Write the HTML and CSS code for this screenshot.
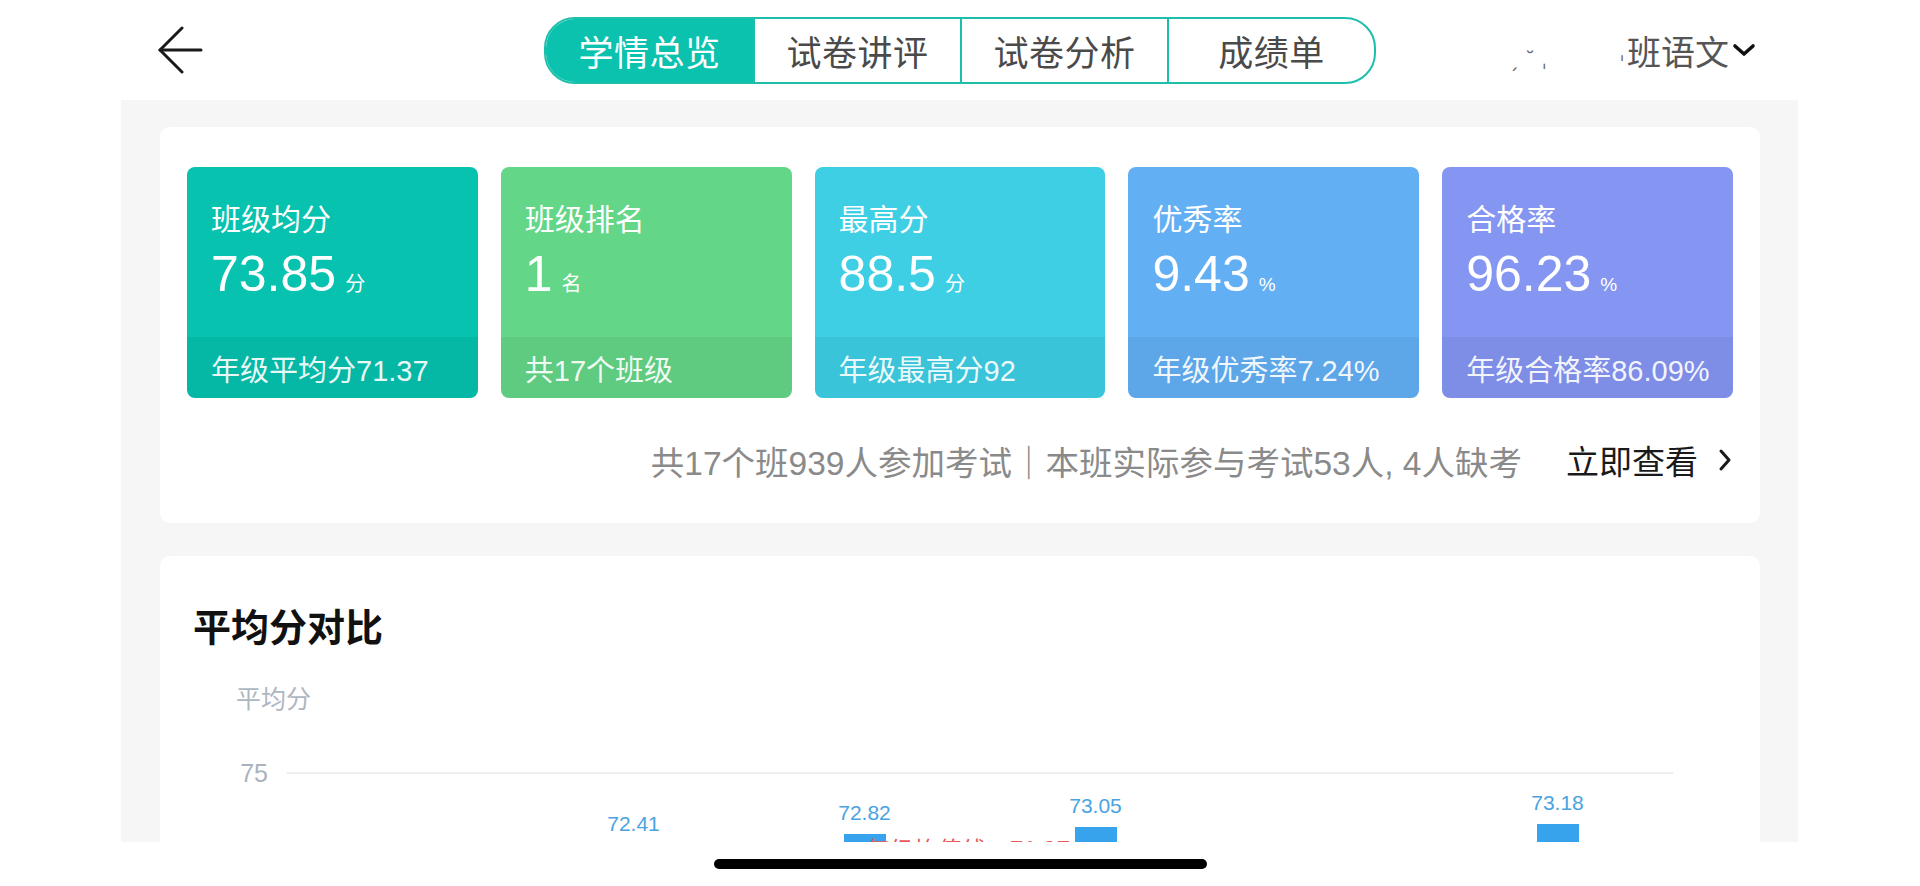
FILE: index.html
```html
<!DOCTYPE html>
<html lang="zh-CN">
<head>
<meta charset="utf-8">
<title>学情总览</title>
<link rel="stylesheet" href="styles.css">
</head>
<body>
<header class="topbar">
  <div class="left">
    <svg class="back" width="46" height="48" viewBox="0 0 46 48" aria-hidden="true">
      <polyline points="24,2 2,24 24,46" fill="none" stroke="#1a1a1a" stroke-width="3" stroke-linecap="round" stroke-linejoin="round"/>
      <line x1="2" y1="24" x2="43" y2="24" stroke="#1a1a1a" stroke-width="3" stroke-linecap="round"/>
    </svg>
  </div>
  <nav class="tabs">
    <div class="tab active">学情总览</div>
    <div class="tab">试卷讲评</div>
    <div class="tab">试卷分析</div>
    <div class="tab">成绩单</div>
  </nav>
  <div class="right">
    <span class="redact">ˏ&nbsp;˘&nbsp;ˌ</span><span class="redact2">ˌ</span><span class="cls">班语文</span>
    <svg class="down" width="24" height="14" viewBox="0 0 24 14" aria-hidden="true">
      <polyline points="3,3 12,11 21,3" fill="none" stroke="#111" stroke-width="3.6" stroke-linecap="round" stroke-linejoin="round"/>
    </svg>
  </div>
</header>

<main class="panel">
  <section class="card summary-card">
    <div class="stats">
      <div class="stat s1">
        <div class="stat-top">
          <div class="stat-label">班级均分</div>
          <div class="stat-value">73.85<span class="unit">分</span></div>
        </div>
        <div class="stat-foot">年级平均分71.37</div>
      </div>
      <div class="stat s2">
        <div class="stat-top">
          <div class="stat-label">班级排名</div>
          <div class="stat-value">1<span class="unit">名</span></div>
        </div>
        <div class="stat-foot">共17个班级</div>
      </div>
      <div class="stat s3">
        <div class="stat-top">
          <div class="stat-label">最高分</div>
          <div class="stat-value">88.5<span class="unit">分</span></div>
        </div>
        <div class="stat-foot">年级最高分92</div>
      </div>
      <div class="stat s4">
        <div class="stat-top">
          <div class="stat-label">优秀率</div>
          <div class="stat-value">9.43<span class="unit pct">%</span></div>
        </div>
        <div class="stat-foot">年级优秀率7.24%</div>
      </div>
      <div class="stat s5">
        <div class="stat-top">
          <div class="stat-label">合格率</div>
          <div class="stat-value">96.23<span class="unit pct">%</span></div>
        </div>
        <div class="stat-foot">年级合格率86.09%</div>
      </div>
    </div>
    <div class="summary-row">
      <span class="summary">共17个班939人参加考试｜本班实际参与考试53人, 4人缺考</span>
      <span class="view">立即查看</span>
      <svg class="chev" width="14" height="24" viewBox="0 0 14 24" aria-hidden="true">
        <polyline points="3,3 11,12 3,21" fill="none" stroke="#1a1a1a" stroke-width="3" stroke-linecap="round" stroke-linejoin="round"/>
      </svg>
    </div>
  </section>

  <section class="card chart-card">
    <h2 class="chart-title">平均分对比</h2>
    <div class="axis-name">平均分</div>
    <div class="plot">
      <div class="grid-row">
        <span class="tick">75</span>
        <span class="gridline"></span>
      </div>
      <div class="bars">
        <div class="col"><span class="bar-label" style="margin-top:62.8px">71.05</span><span class="bar"></span></div>
        <div class="col"><span class="bar-label" style="margin-top:25px">72.41</span><span class="bar"></span></div>
        <div class="col"><span class="bar-label" style="margin-top:13.6px">72.82</span><span class="bar"></span></div>
        <div class="col"><span class="bar-label" style="margin-top:7.2px">73.05</span><span class="bar"></span></div>
        <div class="col"><span class="bar-label" style="margin-top:58.6px">71.20</span><span class="bar"></span></div>
        <div class="col"><span class="bar-label" style="margin-top:3.6px">73.18</span><span class="bar"></span></div>
      </div>
      <div class="markline"><span class="mark-label">年级均值线：71.37</span></div>
    </div>
  </section>
</main>

<footer class="home">
  <span class="home-bar"></span>
</footer>
</body>
</html>
```

FILE: styles.css
```css
* { box-sizing: border-box; }

html, body {
  margin: 0;
  padding: 0;
}

body {
  width: 1920px;
  height: 886px;
  overflow: hidden;
  background: #ffffff;
  font-family: "Liberation Sans", "Noto Sans CJK SC", sans-serif;
  color: #222;
}

/* ---------- header ---------- */
.topbar {
  height: 100px;
  display: grid;
  grid-template-columns: 1fr auto 1fr;
  align-items: center;
}

.left {
  padding-left: 158px;
  display: flex;
  align-items: center;
}

.back { display: block; }

.tabs {
  display: flex;
  height: 67px;
  border: 2px solid #1dbfab;
  border-radius: 31px;
  overflow: hidden;
  background: #fff;
}

.tab {
  width: 207px;
  display: flex;
  align-items: center;
  justify-content: center;
  font-family: "Noto Sans CJK SC", sans-serif;
  font-size: 35px;
  color: #4a4a4a;
  letter-spacing: 0.5px;
}

.tab + .tab { border-left: 2px solid #1dbfab; }

.tab.active {
  background: #0bc2ae;
  color: #ffffff;
}

.right {
  justify-self: end;
  padding-right: 164px;
  display: flex;
  align-items: center;
  color: #555;
}

.redact {
  font-family: "DejaVu Sans", sans-serif;
  font-size: 20px;
  color: #666;
  margin-right: 72px;
  padding-top: 18px;
}

.redact2 {
  font-family: "DejaVu Sans", sans-serif;
  font-size: 22px;
  color: #777;
  margin-right: 2px;
}

.cls {
  font-family: "Noto Sans CJK SC", sans-serif;
  font-size: 34px;
  color: #555;
}

.down { display: block; margin-left: 3px; }

/* ---------- panel ---------- */
.panel {
  margin-left: 121px;
  width: 1677px;
  height: 742px;
  background: #f6f6f6;
  overflow: hidden;
  padding: 27px 38px 0 39px;
}

.card {
  background: #ffffff;
  border-radius: 10px;
}

.summary-card {
  padding: 40px 27px 41px;
}

.stats {
  display: grid;
  grid-template-columns: repeat(5, 1fr);
  gap: 23px;
}

.stat {
  height: 231px;
  border-radius: 8px;
  overflow: hidden;
  display: flex;
  flex-direction: column;
  color: #ffffff;
}

.s1 { background: #06c2af; }
.s2 { background: #64d688; }
.s3 { background: #3ecfe5; }
.s4 { background: #62aff4; }
.s5 { background: #8595f2; }

.stat-top {
  flex: 1;
  padding: 30px 0 0 24px;
}

.stat-label {
  font-family: "Noto Sans CJK SC", sans-serif;
  font-size: 30px;
  line-height: 40px;
}

.stat-value {
  margin-top: 9px;
  font-size: 50px;
  line-height: 56px;
}

.unit {
  font-family: "Noto Sans CJK SC", sans-serif;
  font-size: 20px;
  margin-left: 9px;
}

.unit.pct {
  font-family: "Liberation Sans", sans-serif;
  font-size: 19px;
}

.stat-foot {
  height: 61px;
  display: flex;
  align-items: center;
  padding-left: 24px;
  background: rgba(0, 0, 0, 0.05);
  font-size: 29px;
  color: rgba(255, 255, 255, 0.93);
}

.summary-row {
  margin-top: 40px;
  height: 44px;
  display: flex;
  justify-content: flex-end;
  align-items: center;
}

.summary {
  font-size: 33.5px;
  color: #8a8a8a;
}

.view {
  margin-left: 44px;
  font-family: "Noto Sans CJK SC", sans-serif;
  font-size: 33px;
  color: #1a1a1a;
}

.chev { display: block; margin-left: 20px; margin-right: 1px; }

/* ---------- chart ---------- */
.chart-card {
  margin-top: 33px;
  height: 420px;
  padding: 45px 33px 0;
}

.chart-title {
  margin: 0;
  font-family: "Noto Sans CJK SC", sans-serif;
  font-size: 38px;
  line-height: 47px;
  font-weight: 600;
  color: #111;
}

.axis-name {
  margin-top: 34px;
  padding-left: 43px;
  font-family: "Noto Sans CJK SC", sans-serif;
  font-size: 25px;
  line-height: 30px;
  color: #aeb6c1;
}

.plot {
  position: relative;
  margin: 48px 54px 0 37px;
  height: 200px;
}

.grid-row {
  display: flex;
  align-items: center;
  height: 26px;
}

.tick {
  width: 57px;
  padding-right: 19px;
  text-align: right;
  font-size: 25px;
  color: #a9b3bf;
}

.gridline {
  flex: 1;
  height: 2px;
  background: #eeeeee;
}

.bars {
  margin-left: 57px;
  display: grid;
  grid-template-columns: repeat(6, 1fr);
}

.col {
  display: flex;
  flex-direction: column;
  align-items: center;
}

.bar-label {
  font-size: 21px;
  line-height: 26px;
  color: #4aa3df;
}

.bar {
  display: block;
  margin-top: 8px;
  width: 42px;
  height: 200px;
  background: #36a3ec;
}

.markline {
  position: absolute;
  left: 636px;
  top: 76px;
}

.mark-label {
  font-family: "Noto Sans CJK SC", sans-serif;
  font-size: 24px;
  line-height: 26px;
  color: #e8575a;
}

/* ---------- home indicator ---------- */
.home {
  height: 44px;
  display: flex;
  justify-content: center;
}

.home-bar {
  display: block;
  margin-top: 17px;
  width: 493px;
  height: 10px;
  border-radius: 5px;
  background: #000;
}
```
